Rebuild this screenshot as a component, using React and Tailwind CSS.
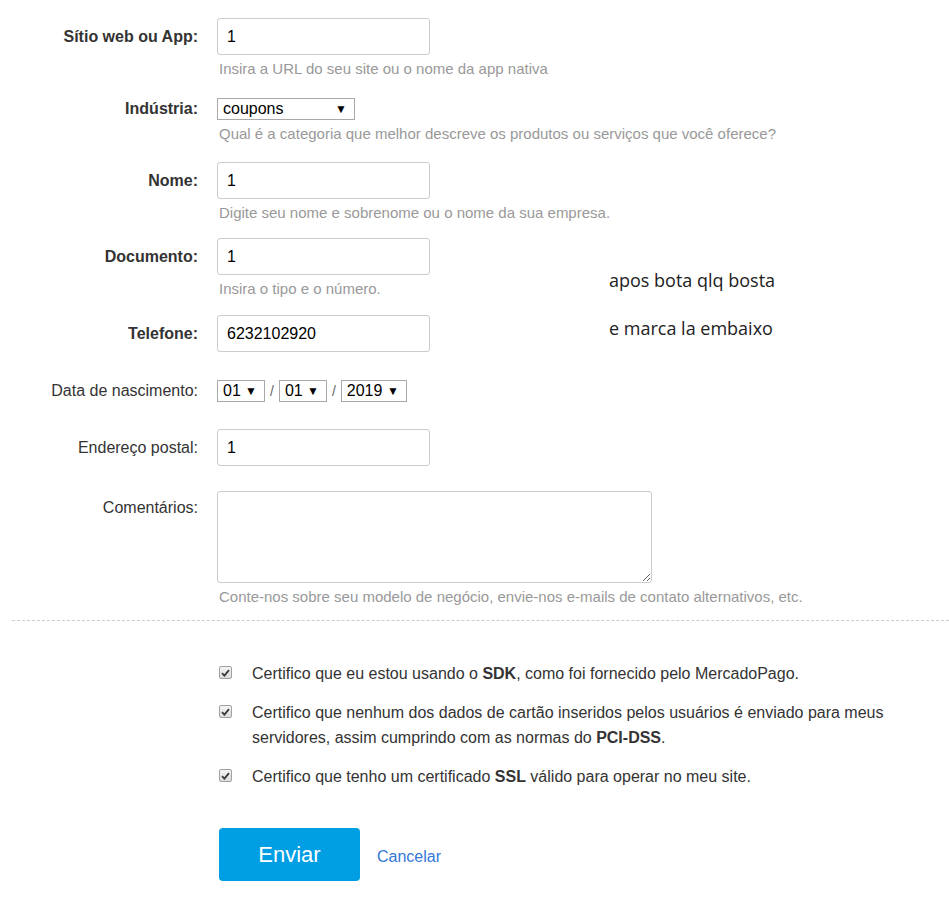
import { useState } from "react";

const font = { fontFamily: '"Liberation Sans", Arial, sans-serif' };

const Field = ({ label, bold, h = 37, children, help, className = "" }) => (
  <div className={`flex ${className}`}>
    <label
      className={`w-[198px] shrink-0 flex justify-end text-[16px] ${bold ? "font-bold text-[#333]" : "text-[#333]"}`}
      style={{ height: h, alignItems: h > 40 ? "flex-start" : "center", paddingTop: h > 40 ? 5 : 0 }}
    >
      {label}
    </label>
    <div className="ml-[19px] flex flex-col">
      {children}
      {help && <p className="mt-[5px] ml-[2px] text-[15px] leading-[18px] text-[#999] whitespace-nowrap">{help}</p>}
    </div>
  </div>
);

const TextInput = ({ value }) => (
  <input
    defaultValue={value}
    className="w-[213px] h-[37px] border border-[#ccc] rounded-[3px] px-[9px] text-[16px] text-black outline-none"
  />
);

const FakeSelect = ({ value, w }) => (
  <div
    className="h-[22px] border border-[#a9a9a9] flex items-center justify-between pl-[5px] pr-[7px] text-[16px] text-black bg-white"
    style={{ width: w }}
  >
    <span>{value}</span>
    <span className="text-[12px]">▼</span>
  </div>
);

const Check = () => (
  <span className="mt-[5px] w-[13px] h-[13px] shrink-0 rounded-[2px] border border-[#a0a0a0] bg-gradient-to-b from-[#f4f4f4] to-[#dcdcdc] flex items-center justify-center">
    <svg width="9" height="8" viewBox="0 0 9 8">
      <path d="M1 4.2 L3.4 6.6 L8 1.2" fill="none" stroke="#3a3a3a" strokeWidth="1.8" />
    </svg>
  </span>
);

export default function App() {
  const [agreed] = useState([true, true, true]);
  return (
    <div className="relative bg-white w-[949px] min-h-[900px] pt-[18px]" style={font}>
      <Field label="Sítio web ou App:" bold help="Insira a URL do seu site ou o nome da app nativa">
        <TextInput value="1" />
      </Field>

      <Field label="Indústria:" bold h={22} className="mt-[20px]" help="Qual é a categoria que melhor descreve os produtos ou serviços que você oferece?">
        <FakeSelect value="coupons" w={138} />
      </Field>

      <Field label="Nome:" bold className="mt-[19px]" help="Digite seu nome e sobrenome ou o nome da sua empresa.">
        <TextInput value="1" />
      </Field>

      <Field label="Documento:" bold className="mt-[16px]" help="Insira o tipo e o número.">
        <TextInput value="1" />
      </Field>

      <Field label="Telefone:" bold className="mt-[17px]">
        <TextInput value="6232102920" />
      </Field>

      <Field label="Data de nascimento:" h={22} className="mt-[28px]">
        <div className="flex items-center gap-[5px] text-[14px] text-[#666]">
          <FakeSelect value="01" w={48} />
          <span>/</span>
          <FakeSelect value="01" w={48} />
          <span>/</span>
          <FakeSelect value="2019" w={66} />
        </div>
      </Field>

      <Field label="Endereço postal:" className="mt-[27px]">
        <TextInput value="1" />
      </Field>

      <Field label="Comentários:" h={92} className="mt-[25px]" help="Conte-nos sobre seu modelo de negócio, envie-nos e-mails de contato alternativos, etc.">
        <textarea className="w-[435px] h-[92px] border border-[#ccc] rounded-[3px] px-[9px] py-[6px] text-[16px] outline-none" />
      </Field>

      <div className="ml-[12px] mt-[14px] border-t border-dashed border-[#ccc]" />

      <div className="ml-[219px] mt-[40px] flex flex-col gap-[14px] text-[16px] text-[#333] leading-[25px] w-[700px]">
        <div className="flex gap-[20px]">
          {agreed[0] && <Check />}
          <p className="w-[650px]">
            Certifico que eu estou usando o <b>SDK</b>, como foi fornecido pelo MercadoPago.
          </p>
        </div>
        <div className="flex gap-[20px]">
          {agreed[1] && <Check />}
          <p className="w-[650px]">
            Certifico que nenhum dos dados de cartão inseridos pelos usuários é enviado para meus servidores, assim cumprindo com as normas do <b>PCI-DSS</b>.
          </p>
        </div>
        <div className="flex gap-[20px]">
          {agreed[2] && <Check />}
          <p className="w-[650px]">
            Certifico que tenho um certificado <b>SSL</b> válido para operar no meu site.
          </p>
        </div>
      </div>

      <div className="ml-[219px] mt-[39px] flex items-center gap-[17px]">
        <button className="w-[141px] h-[53px] rounded-[4px] bg-[#009ee3] text-white text-[22px]">Enviar</button>
        <a href="#" className="text-[16px] text-[#3477d6] mt-[4px]">Cancelar</a>
      </div>

      <div
        className="absolute left-[609px] top-[267px] text-[18px] text-[#222] leading-[26px] flex flex-col gap-[22px]"
        style={{ fontFamily: '"Open Sans", "Noto Sans", sans-serif' }}
      >
        <span>apos bota qlq bosta</span>
        <span>e marca la embaixo</span>
      </div>
    </div>
  );
}
